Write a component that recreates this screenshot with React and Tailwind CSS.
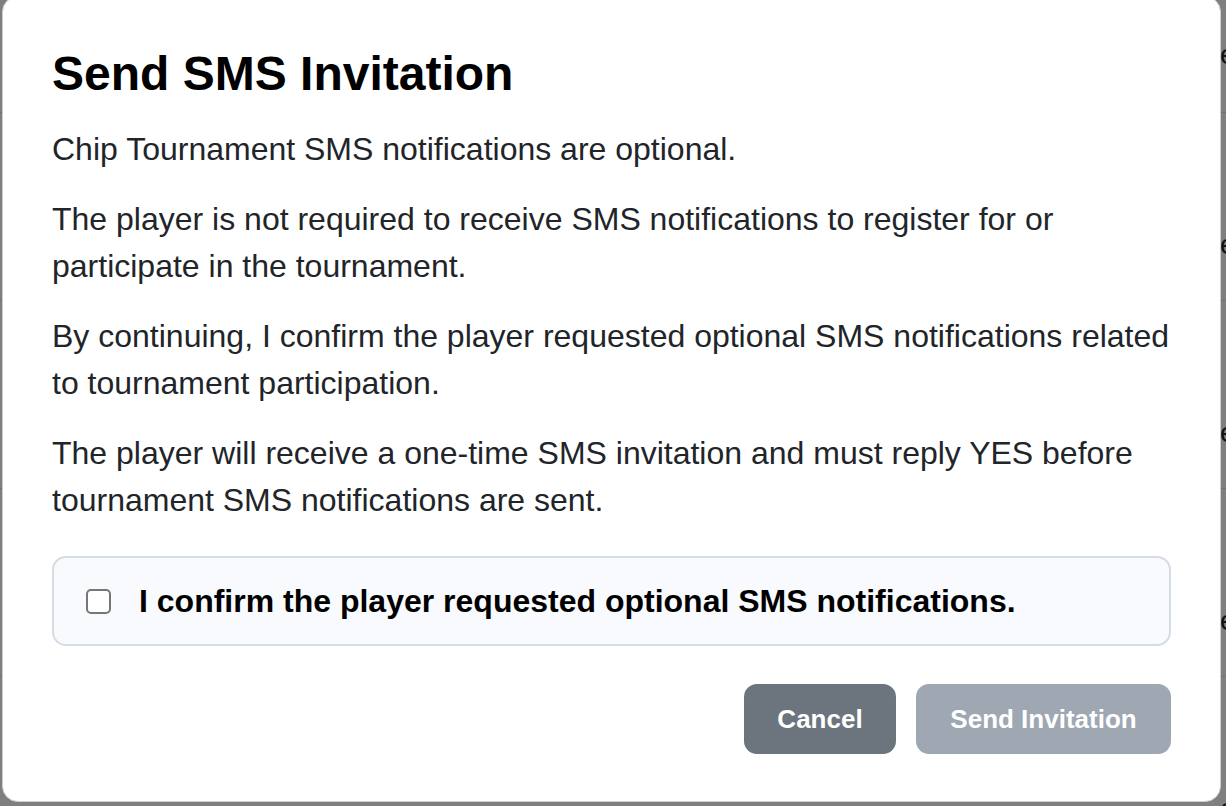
import React from 'react';

const rows = ['eligible', 'eligible', 'eligible', 'eligible', 'eligible'];

function PageBehind() {
  return (
    <div className="flex flex-col bg-white text-[#212529]">
      <div className="h-[113px] border-b border-[#dee2e6] flex items-start pt-[38px] pl-[1220px] text-[28px] leading-[34px]">
        eligible
      </div>
      {rows.map((label, i) => (
        <div
          key={i}
          className="h-[188px] border-b border-[#dee2e6] flex items-start pt-[115px] pl-[1220px] text-[28px] leading-[34px]"
        >
          {label}
        </div>
      ))}
    </div>
  );
}

function ConfirmBox() {
  return (
    <label className="mt-[32px] h-[90px] flex items-center gap-[28px] px-[32px] rounded-[14px] border-2 border-[#d6dce4] bg-[#f8fafd] cursor-pointer">
      <span className="w-[25px] h-[25px] shrink-0 rounded-[5px] border-2 border-[#767676] bg-white" />
      <span className="text-[32px] leading-[46px] font-bold text-black">
        I confirm the player requested optional SMS notifications.
      </span>
    </label>
  );
}

export default function App() {
  return (
    <div
      className="relative h-[806px] w-[1226px] overflow-hidden"
      style={{ fontFamily: '"Liberation Sans", Arial, sans-serif' }}
    >
      <PageBehind />
      <div className="absolute inset-0 bg-black/50" />

      <div className="absolute left-[2px] top-[-4px] w-[1219px] h-[806px] rounded-[16px] border border-[#c9d0da] bg-white pl-[49px] pr-[49px] pt-[48px] flex flex-col">
        <h2 className="text-[48px] leading-[58px] font-bold text-black mb-[23px]">Send SMS Invitation</h2>

        <div className="flex flex-col gap-[23px] text-[32px] leading-[47px] text-[#212529]">
          <p>Chip Tournament SMS notifications are optional.</p>
          <p>
            The player is not required to receive SMS notifications to register for or participate in the
            tournament.
          </p>
          <p>
            By continuing, I confirm the player requested optional SMS notifications related to tournament
            participation.
          </p>
          <p>
            The player will receive a one-time SMS invitation and must reply YES before tournament SMS
            notifications are sent.
          </p>
        </div>

        <ConfirmBox />

        <div className="mt-[38px] flex justify-end gap-[20px]">
          <button className="h-[70px] w-[152px] rounded-[13px] bg-[#6c757d] text-white text-[26px] font-bold">
            Cancel
          </button>
          <button
            disabled
            className="h-[70px] w-[255px] rounded-[13px] bg-[#9ea7b2] text-white text-[26px] font-bold"
          >
            Send Invitation
          </button>
        </div>
      </div>
    </div>
  );
}
